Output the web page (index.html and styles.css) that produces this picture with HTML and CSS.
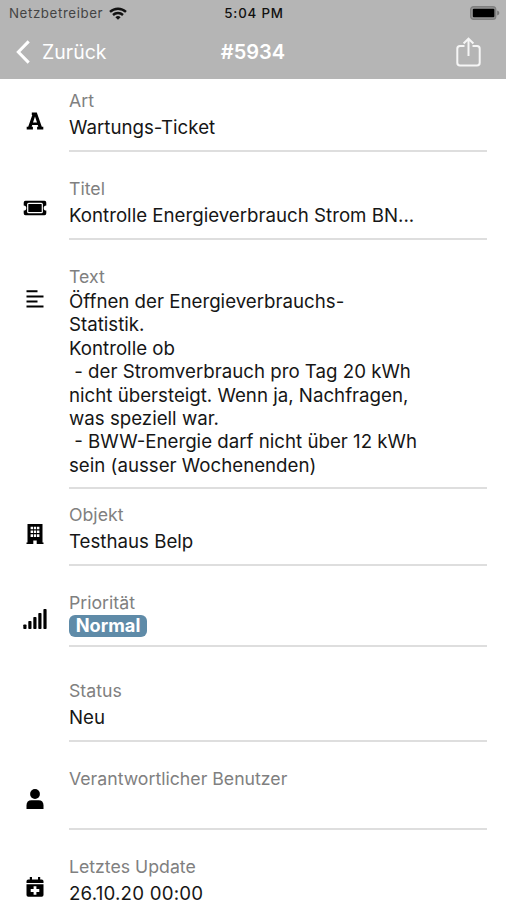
FILE: index.html
```
<!DOCTYPE html>
<html lang="de">
	<head>
		<meta charset="UTF-8" />
		<meta name="viewport" content="width=device-width, initial-scale=1.0" />
		<title>#5934</title>
		<link rel="stylesheet" href="styles.css">
	</head>

	<body>
		<header>
			<div class="status-bar">
				<div class="carrier">
					<span>Netzbetreiber</span>
					<svg width="18" height="13" viewBox="0 0 18 13" fill="none" stroke="#111" stroke-width="2.4">
						<path d="M1 4.9a11.6 11.6 0 0 1 16 0" />
						<path d="M4 8a7.4 7.4 0 0 1 10 0" />
						<path d="M9 12.8L6.4 10.2a3.8 3.8 0 0 1 5.2 0z" fill="#111" stroke="none" />
					</svg>
				</div>
				<span class="clock">5:04 PM</span>
				<svg class="battery" width="30" height="14" viewBox="0 0 30 14">
					<rect x=".7" y=".7" width="25" height="12.6" rx="2.8" fill="#999" stroke="#808080" stroke-width="1.4" />
					<rect x="2.8" y="2.8" width="21.6" height="8.4" rx="1" fill="#000" />
					<path d="M27.2 4.5q2.2.8 2.2 2.5t-2.2 2.5z" fill="#777" />
				</svg>
			</div>
			<nav class="nav-bar">
				<a class="back" href="#">
					<svg width="14" height="24" viewBox="0 0 14 24" fill="none" stroke="#fff" stroke-width="3">
						<path d="M12.7 1.4L2.3 12l10.4 10.6" />
					</svg>
					<span>Zurück</span>
				</a>
				<h1>#5934</h1>
				<a class="share" href="#">
					<svg width="25" height="30" viewBox="0 0 25 30" fill="none" stroke="#f6f6f6" stroke-width="2">
						<path d="M8.5 9H4Q1.3 9 1.3 11.7v14q0 2.8 2.7 2.8h17q2.7 0 2.7-2.8v-14Q23.7 9 21 9h-4.5" />
						<path d="M12.5 19V2M7.6 6.5l4.9-4.8 4.9 4.8" />
					</svg>
				</a>
			</nav>
		</header>

		<main class="ticket">
			<section class="row">
				<div class="icon">
					<svg width="18" height="18" viewBox="0 0 18 18">
						<path d="M.7 14.7h1.5L6.3 3H5.8V.5h5L15.8 14.7h1.5v2.7h-6.2v-2.7h1.2l-.5-1.7H6.2l-.5 1.7h1.2v2.7H.7zM7 10.4h4L9 4.6z" fill-rule="evenodd" />
					</svg>
				</div>
				<div class="field">
					<h2>Art</h2>
					<p>Wartungs-Ticket</p>
				</div>
			</section>

			<section class="row">
				<div class="icon icon-ticket">
					<svg width="24" height="16" viewBox="0 0 24 16">
						<path d="M2.5.7h19q1.800 0 1.800 2v2.700a2.600 2.600 0 0 0 0 5.200v2.700q0 2-1.800 2h-19q-1.800 0-1.800-2v-2.700a2.600 2.600 0 0 0 0-5.200V2.700q0-2 1.800-2z" />
						<rect x="4.7" y="3.3" width="14.6" height="9.4" rx="1" fill="none" stroke="#fff" stroke-width="1.2" />
					</svg>
				</div>
				<div class="field">
					<h2>Titel</h2>
					<p>Kontrolle Energieverbrauch Strom BN...</p>
				</div>
			</section>

			<section class="row row-text">
				<div class="icon">
					<svg width="18" height="18" viewBox="0 0 18 18">
						<path d="M.5.3h11v2H.5zM.5 5.400h17v2H.5zM.5 10.500h11v2H.5zM.5 15.500h17v2H.5z" />
					</svg>
				</div>
				<div class="field">
					<h2>Text</h2>
					<p class="long">Öffnen der Energieverbrauchs-
Statistik.
Kontrolle ob
 - der Stromverbrauch pro Tag 20 kWh
nicht übersteigt. Wenn ja, Nachfragen,
was speziell war.
 - BWW-Energie darf nicht über 12 kWh
sein (ausser Wochenenden)</p>
				</div>
			</section>

			<section class="row">
				<div class="icon icon-building">
					<svg width="18" height="20" viewBox="0 0 18 20">
						<path d="M1.5 0h15v18.500h1V20h-6.800v-3.500H7.300V20H.5v-1.500h1z" />
						<path d="M4.600 2.700h2.400v2.600H4.600zM7.800 2.700h2.400v2.600H7.800zM11 2.700h2.400v2.600H11zM4.600 6.500h2.400v2.600H4.600zM7.800 6.500h2.400v2.600H7.800zM11 6.500h2.400v2.600H11zM4.600 10.300h2.400v2.600H4.600zM7.800 10.300h2.400v2.600H7.800zM11 10.300h2.400v2.600H11z" fill="#fff" />
					</svg>
				</div>
				<div class="field">
					<h2>Objekt</h2>
					<p>Testhaus Belp</p>
				</div>
			</section>

			<section class="row row-priority">
				<div class="icon">
					<svg width="24" height="20" viewBox="0 0 24 20">
						<rect x=".3" y="15.5" width="3.2" height="4.5" rx=".8" />
						<rect x="5.3" y="12" width="3.2" height="8" rx=".8" />
						<rect x="10.3" y="8" width="3.2" height="12" rx=".8" />
						<rect x="15.3" y="4" width="3.2" height="16" rx=".8" />
						<rect x="20.4" y="0" width="3.2" height="20" rx=".8" />
					</svg>
				</div>
				<div class="field">
					<h2>Priorität</h2>
					<span class="badge">Normal</span>
				</div>
			</section>

			<section class="row">
				<div class="icon"></div>
				<div class="field">
					<h2>Status</h2>
					<p>Neu</p>
				</div>
			</section>

			<section class="row">
				<div class="icon">
					<svg width="18" height="20" viewBox="0 0 18 20">
						<circle cx="9" cy="5" r="4.9" />
						<path d="M.5 20v-3.5Q.5 11.3 5.5 11.3h7q5 0 5 5.2V20z" />
					</svg>
				</div>
				<div class="field">
					<h2>Verantwortlicher Benutzer</h2>
				</div>
			</section>

			<section class="row">
				<div class="icon">
					<svg width="18" height="20" viewBox="0 0 18 20">
						<path d="M3.8 0H6v2.500h6V0h2.200v2.500h1.500q1.800 0 1.800 1.800v1.700H.5V4.300q0-1.800 1.800-1.800h1.500zM.5 7.300h17V18q0 1.800-1.800 1.800H2.300Q.5 19.800.5 18z" />
						<path d="M7.600 9.300h2.800v2.800h2.900v2.800h-2.900v2.800H7.600v-2.800H4.700v-2.800h2.900z" fill="#fff" />
					</svg>
				</div>
				<div class="field">
					<h2>Letztes Update</h2>
					<p class="date">26.10.20 00:00</p>
				</div>
			</section>
		</main>
	</body>
</html>
```
FILE: styles.css
```
:root {
	--bar-color:   #b5b5b5;
	--fg-color:    #161616;
	--fg-muted:    #808080;
	--ruler-color: #dedede;
	--badge-color: #5f8ba8;
}

* {
	box-sizing: border-box;
}

body {
	margin: 0;
	height: 900px;
	overflow: hidden;
	background: #fff;
	color: var(--fg-color);
	font-family: Inter, "Liberation Sans", sans-serif;
	font-size: 18.7px;
}

h1, h2, p {
	margin: 0;
	font-weight: 400;
}

svg {
	display: block;
}

header {
	height: 79px;
	background: var(--bar-color);
}

.status-bar, .nav-bar {
	display: grid;
	grid-template-columns: 1fr auto 1fr;
	align-items: center;
}
.status-bar {
	height: 26px;
	padding: 0 7px 0 9px;
	font-size: 13.3px;
}
.carrier {
	display: flex;
	align-items: center;
	gap: 6px;
	color: #444;
	letter-spacing: .6px;
}
.clock {
	color: #111;
	font-weight: 500;
	letter-spacing: .8px;
}
.battery {
	justify-self: end;
	margin-right: -1px;
}

.nav-bar {
	height: 52px;
	padding: 0 16px;
	color: #fff;
}
.nav-bar h1 {
	font-size: 20px;
	font-weight: 600;
}
.back {
	display: flex;
	align-items: center;
	gap: 12px;
	color: #fff;
	font-size: 19.5px;
	text-decoration: none;
}
.share {
	justify-self: end;
	margin: 0 9px 1px 0;
}

.row {
	display: grid;
	grid-template-columns: 69px 418px;
	height: 88px;
}
.icon {
	display: flex;
	align-items: center;
	justify-content: center;
	height: 24px;
	margin-top: 30px;
}
.icon-ticket, .icon-building {
	margin-top: 29px;
}
.field {
	height: 73px;
	padding-top: 10px;
	border-bottom: 2px solid var(--ruler-color);
	line-height: 24px;
}
.field h2 {
	margin-bottom: 3px;
	color: var(--fg-muted);
	font-size: 17.7px;
	line-height: 24px;
}
.date {
	letter-spacing: .2px;
}

.row-text {
	height: 238px;
}
.row-text .icon {
	margin-top: 32px;
}
.row-text .field {
	height: 234px;
}
.row-text h2 {
	margin-bottom: 1px;
}
.long {
	line-height: 23.4px;
	white-space: pre;
}

.row-priority .icon {
	margin-top: 26px;
}
.row-priority .field {
	height: 66px;
}
.row-priority h2 {
	margin-bottom: 0;
}
.badge {
	display: block;
	width: 78px;
	height: 22px;
	border-radius: 6px;
	background: var(--badge-color);
	color: #fff;
	font-size: 18.2px;
	font-weight: 700;
	line-height: 21px;
	text-align: center;
}
```
